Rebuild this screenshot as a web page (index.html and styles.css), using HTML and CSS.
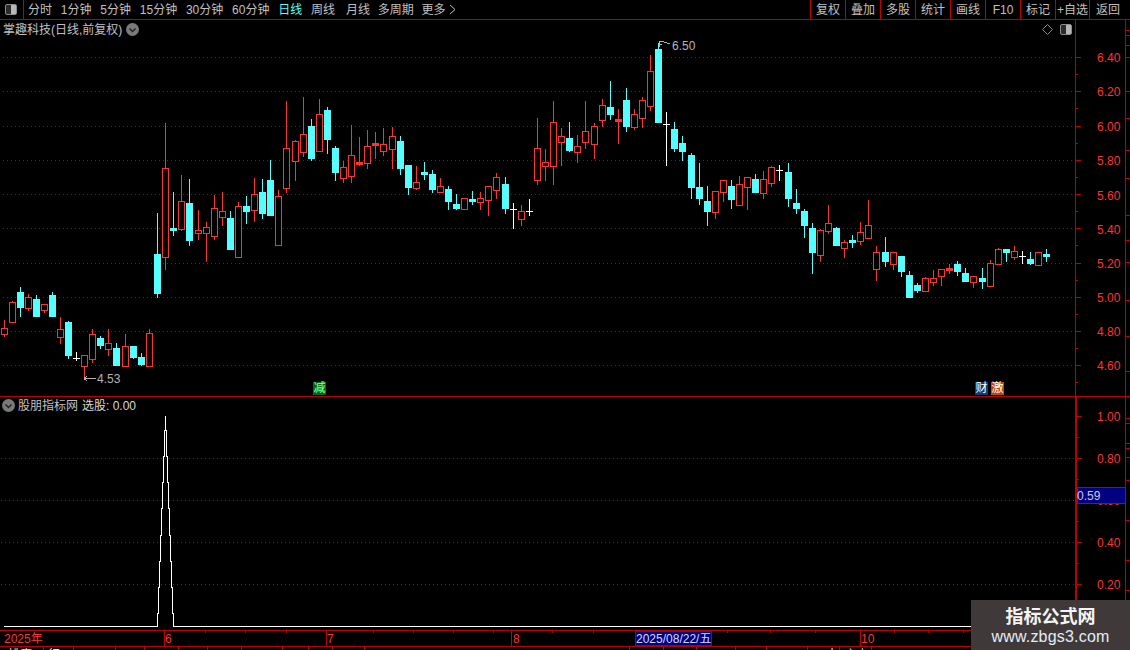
FILE: index.html
```html
<!DOCTYPE html>
<html lang="zh-CN">
<head>
<meta charset="utf-8">
<title>掌趣科技 日线</title>
<link rel="stylesheet" href="styles.css">
</head>
<body>
<div class="app">
  <header class="topbar">
    <div class="layout-btn"><span class="toggle"></span></div>
    <nav class="tabs">
      <span>分时</span><span>1分钟</span><span>5分钟</span><span>15分钟</span><span>30分钟</span><span>60分钟</span>
      <span class="active">日线</span><span>周线</span><span class="loose">月线</span><span class="tight">多周期</span>
      <span class="tight">更多 <svg class="more" width="7" height="11" viewBox="0 0 7 11"><path d="M1 1l5 4.500-5 4.500"/></svg></span>
    </nav>
    <div class="tools">
      <span>复权</span><span>叠加</span><span>多股</span><span>统计</span><span>画线</span><span>F10</span><span>标记</span><span class="narrow">+自选</span><span class="last">返回</span>
    </div>
  </header>

  <section class="panel main-panel">
    <svg class="canvas" width="1130" height="376" viewBox="0 20 1130 376">
      <g class="grid">
        <path d="M3 57.500H1075M3 91.500H1075M3 126.500H1075M3 160.500H1075M3 194.500H1075M3 228.500H1075M3 263.500H1075M3 297.500H1075M3 331.500H1075M3 365.500H1075"/>
      </g>
      <g class="axis-line">
        <path d="M1075.500 20V396M1125.500 20V396"/>
        <path d="M1075 57.500h6M1075 91.500h6M1075 126.500h6M1075 160.500h6M1075 194.500h6M1075 228.500h6M1075 263.500h6M1075 297.500h6M1075 331.500h6M1075 365.500h6"/>
        <path d="M1075 74.500h3M1075 108.500h3M1075 143.500h3M1075 177.500h3M1075 211.500h3M1075 245.500h3M1075 280.500h3M1075 314.500h3M1075 348.500h3M1075 382.500h3"/>
        <path d="M1126 30.500h4M1126 35.500h4M1126 45.500h4M1126 57.500h4M1126 91.500h4M1126 118.500h4M1126 150.500h4M1126 178.500h4M1126 215.500h4M1126 240.500h4M1126 262.500h4M1126 300.500h4M1126 336.500h4M1126 371.500h4"/>
      </g>
      <g class="axis-text">
        <text x="1097" y="62">6.40</text><text x="1097" y="96">6.20</text><text x="1097" y="131">6.00</text><text x="1097" y="165">5.80</text><text x="1097" y="200">5.60</text>
        <text x="1097" y="234">5.40</text><text x="1097" y="268">5.20</text><text x="1097" y="302">5.00</text><text x="1097" y="336">4.80</text><text x="1097" y="370">4.60</text>
      </g>
      <g id="candles" data-src="chart.js">
        <path id="red" class="c-red"/>
        <path id="cyanWick" class="c-cyan-wick"/>
        <path id="cyanBody" class="c-cyan-body"/>
        <path id="white" class="c-white"/>
      </g>
      <path class="pointer" d="M659 47V41H664M659 44H662M661 41L670 44"/>
      <text class="price" x="672" y="50">6.50</text>
      <path class="pointer" d="M84 378.500H96M84 378.500L87 376M84 378.500L87 381"/>
      <text class="price" x="97" y="383">4.53</text>
    </svg>
    <div class="title-row">
      <span>掌趣科技(日线,前复权)</span>
      <svg class="chev" width="13" height="13" viewBox="0 0 13 13"><circle cx="6.500" cy="6.500" r="6.500"/><path d="M3.500 5.500l3 3 3-3"/></svg>
    </div>
    <svg class="corner-diamond" width="11" height="11" viewBox="0 0 11 11"><path d="M5.500 .5l5 5-5 5-5-5z"/></svg>
    <span class="toggle corner-toggle"></span>
    <b class="flag flag-green">减</b>
    <b class="flag flag-blue">财</b>
    <b class="flag flag-orange">激</b>
  </section>

  <section class="panel sub-panel">
    <svg class="canvas" width="1130" height="233" viewBox="0 397 1130 233">
      <g class="grid"><path d="M1 458.500H1075M1 500.500H1075M1 542.500H1075M1 584.500H1075"/></g>
      <g class="axis-line thick"><path d="M1076 397V630"/></g>
      <g class="axis-line">
        <path d="M1125.500 397V630"/>
        <path d="M1076 416.500h6M1076 458.500h6M1076 500.500h6M1076 542.500h6M1076 584.500h6M1076 437.500h3M1076 479.500h3M1076 521.500h3M1076 563.500h3M1076 605.500h3"/>
        <path d="M1126 418.500h4M1126 423.500h4M1126 443.500h4M1126 448.500h4M1126 457.500h4M1126 480.500h4M1126 520.500h4M1126 560.500h4M1126 590.500h4"/>
      </g>
      <g class="axis-text">
        <text x="1097" y="421">1.00</text><text x="1097" y="463">0.80</text><text x="1097" y="505">0.60</text><text x="1097" y="547">0.40</text><text x="1097" y="589">0.20</text>
      </g>
      <path class="signal" d="M4 626.500H157.500V613H158.500V587H159.500V561H160.500V535H161.500V508H162.500V482H163.500V456H164.500V430H165.500V416V430H166.500V456H167.500V482H168.500V508H169.500V535H170.500V561H171.500V587H172.500V613H173.500V626.500H1075"/>
      <rect class="badge" x="1077" y="487.500" width="48" height="16"/>
      <text class="badge-text" x="1077" y="500">0.59</text>
    </svg>
    <div class="title-row sub-title">
      <svg class="chev" width="13" height="13" viewBox="0 0 13 13"><circle cx="6.500" cy="6.500" r="6.500"/><path d="M3.500 5.500l3 3 3-3"/></svg>
      <span>股朋指标网</span>
      <span class="select">选股: 0.00</span>
    </div>
  </section>

  <footer class="time-strip">
    <svg class="canvas" width="1130" height="20" viewBox="0 630 1130 20">
      <g class="axis-line">
        <path d="M0 630.500H1130M0 646.500H1130"/>
        <path d="M164.500 630V646M326.500 630V646M511.500 630V646M860.500 630V646"/>
        <path d="M205.500 630v3M245.500 630v3M286.500 630v3M373.500 630v3M413.500 630v3M453.500 630v3M493.500 630v3M552.500 630v3M593.500 630v3M727.500 630v3M770.500 630v3M815.500 630v3M894.500 630v3M928.500 630v3M963.500 630v3"/>
        <path d="M43.500 646v4M73.500 646v4M115.500 646v4M144.500 646v4M178.500 646v4M207.500 646v4M241.500 646v4M282.500 646v4M308.500 646v4M332.500 646v4M364.500 646v4M629.500 646v4M663.500 646v4M696.500 646v4M735.500 646v4M766.500 646v4M807.500 646v4M839.500 646v4M871.500 646v4"/>
      </g>
      <g class="axis-text time-text">
        <text x="4" y="643">2025年</text><text x="165" y="643">6</text><text x="327" y="643">7</text><text x="513" y="643">8</text><text x="861" y="643">10</text>
      </g>
      <rect class="date-box" x="635.500" y="631.500" width="76" height="14"/>
      <text class="date-text" x="636" y="643">2025/08/22/五</text>
      <text class="tip" x="8" y="659">排序</text>
      <text class="tip" x="48" y="659">行</text>
      <text class="tip" x="826" y="659">十</text>
      <text class="tip tip-cyan" x="845" y="659">主力</text>
    </svg>
  </footer>

  <aside class="watermark">
    <strong>指标公式网</strong>
    <span>www.zbgs3.com</span>
  </aside>
</div>
<script src="chart.js"></script>
</body>
</html>
```

FILE: styles.css
```css
* { box-sizing: border-box; }
html, body { margin: 0; padding: 0; background: #000; }
body { font: 12px/1 "Liberation Sans", "Noto Sans CJK SC", sans-serif; color: #c0c0c0; }

.app {
  position: relative;
  width: 1130px;
  height: 650px;
  overflow: hidden;
  background: #000;
  display: flex;
  flex-direction: column;
}

/* top toolbar */
.topbar {
  display: flex;
  flex: 0 0 20px;
  height: 20px;
  border-bottom: 1px solid #c00000;
}
.layout-btn {
  flex: 0 0 24px;
  border-right: 1px solid #c00000;
  padding-right: 1px;
  display: flex;
  align-items: center;
  justify-content: center;
}
.toggle {
  display: block;
  width: 12px;
  height: 11px;
  border: 1px solid #8c8c8c;
  border-radius: 2px;
  background: linear-gradient(to right, #2c2c2c 50%, #b8b8b8 50%);
}
.tabs {
  display: flex;
  align-items: center;
  gap: 8.800px;
  padding-left: 4px;
  flex: 1;
}
.tabs span { white-space: nowrap; }
.tabs .active { color: #55ffff; }
.tabs .loose { margin-left: 2px; }
.tabs .tight { margin-left: -1px; }
.more { vertical-align: -1px; fill: none; stroke: #c0c0c0; }
.tools { display: flex; height: 19px; }
.tools span {
  width: 35px;
  border-left: 1px solid #c00000;
  display: flex;
  align-items: center;
  justify-content: center;
  white-space: nowrap;
}
.tools .narrow { width: 34px; }
.tools .last { width: 41px; padding-right: 4px; }

/* chart panels */
.panel { position: relative; }
.main-panel { flex: 0 0 377px; height: 377px; border-bottom: 1px solid #c00000; }
.sub-panel { flex: 0 0 233px; height: 233px; }
.canvas { position: absolute; left: 0; top: 0; display: block; }
.grid path { fill: none; stroke: #b00000; stroke-dasharray: 1 3; shape-rendering: crispEdges; }
.axis-line path { fill: none; stroke: #c00000; shape-rendering: crispEdges; }
.axis-line.thick path { stroke-width: 2; }
.axis-text text { fill: #ff3232; font-size: 12px; }
.price { fill: #b4b4b4; font-size: 12px; }
.pointer { fill: none; stroke: #b4b4b4; shape-rendering: crispEdges; }

.c-red { fill: #000; stroke: #ff3232; shape-rendering: crispEdges; }
.c-cyan-wick { fill: none; stroke: #55ffff; shape-rendering: crispEdges; }
.c-cyan-body { fill: #55ffff; shape-rendering: crispEdges; }
.c-white { fill: none; stroke: #fff; shape-rendering: crispEdges; }

.title-row {
  position: relative;
  display: flex;
  align-items: center;
  gap: 4px;
  height: 19px;
  padding-left: 3px;
  white-space: nowrap;
}
.sub-title { gap: 3px; padding-left: 2px; height: 17px; }
.sub-title .select { margin-left: 1px; color: #d8d8d8; }
.chev circle { fill: #7a7a7a; }
.chev path { fill: none; stroke: #222; stroke-width: 1.500; }

.corner-diamond { position: absolute; left: 1042px; top: 4px; fill: none; stroke: #8c8c8c; }
.corner-toggle { position: absolute; left: 1060px; top: 4px; }

.flag {
  position: absolute;
  top: 362px;
  width: 13px;
  height: 13px;
  font-weight: normal;
  font-size: 12px;
  line-height: 13px;
  text-align: center;
  color: #fff;
}
.flag-green { left: 313px; background: #006a18; color: #9cff9c; }
.flag-blue { left: 975px; background: #0a3e78; }
.flag-orange { left: 991px; background: #b84a10; }

.signal { fill: none; stroke: #fff; shape-rendering: crispEdges; }
.badge { fill: #000080; stroke: #c00000; shape-rendering: crispEdges; }
.badge-text { fill: #c8c8e8; font-size: 12px; }

/* time axis */
.time-strip { position: relative; flex: 0 0 20px; height: 20px; overflow: hidden; }
.date-box { fill: #000080; stroke: #2020c0; shape-rendering: crispEdges; }
.date-text { fill: #d8d8f8; font-size: 12px; }
.tip { fill: #e0e0e0; font-size: 12px; }
.tip-cyan { fill: #55ffff; }

/* watermark badge */
.watermark {
  position: absolute;
  right: 0;
  bottom: 0;
  width: 159px;
  height: 50px;
  background: #3f3a39;
  display: flex;
  flex-direction: column;
  align-items: center;
  padding-top: 4px;
  gap: 2px;
  color: #eef3fa;
}
.watermark strong { font: 700 18px/22px "Noto Sans CJK SC", sans-serif; color: #f4f4f4; }
.watermark span { font: 16px/18px "Liberation Sans", sans-serif; letter-spacing: .2px; color: #e2ecf8; }
```

FILE: chart.js
```js
// Daily candles: [kind, high, low, bodyTop, bodyBottom] in page pixels.
// kind: r = rising (hollow red), c = falling (solid cyan), w = doji (white cross).
var DATA = [
  ['r',320,336,328,334],['r',301,322,302,322],['c',287,316,292,307],['r',294,310,297,308],['c',295,316,299,316],
  ['r',304,312,304,310],['c',292,316,295,316],['r',317,343,329,337],['c',321,358,322,355],['w',352,360,358,358],
  ['r',355,378,355,366],['r',329,362,334,359],['c',336,348,338,345],['r',329,355,343,349],['c',343,365,348,365],
  ['r',334,366,346,366],['c',346,358,346,357],['c',353,365,357,364],['r',329,366,333,366],['c',213,297,254,293],
  ['r',123,269,168,257],['c',192,235,228,230],['r',175,230,201,229],['c',179,245,203,240],['r',210,239,230,233],
  ['r',222,261,227,233],['r',195,239,208,236],['r',192,225,211,217],['c',211,249,218,249],['r',202,257,206,257],
  ['c',196,223,206,211],['r',178,221,194,210],['c',179,218,192,213],['c',160,215,180,215],['r',190,245,196,245],
  ['r',101,192,148,188],['r',140,180,141,161],['r',97,156,134,152],['c',119,160,126,158],['r',99,151,114,151],
  ['c',107,153,110,139],['c',146,180,148,172],['r',161,182,167,178],['r',125,182,155,176],['r',137,165,162,164],
  ['r',130,168,146,163],['r',132,158,143,145],['r',128,155,144,151],['r',127,168,136,149],['c',136,174,141,168],
  ['c',165,194,165,187],['r',166,189,182,188],['c',162,179,172,174],['c',170,192,174,189],['r',178,192,186,192],
  ['c',186,209,189,201],['c',194,209,204,208],['r',198,209,198,209],['c',191,204,199,201],['r',192,209,198,202],
  ['r',186,215,186,200],['r',173,198,177,190],['c',177,213,184,208],['w',203,228,209,209],['r',205,225,211,219],
  ['w',199,215,211,211],['r',118,184,148,180],['r',149,180,162,166],['r',101,184,122,166],['r',128,165,136,142],
  ['c',122,151,138,150],['r',135,162,146,152],['r',101,148,131,142],['r',123,158,126,144],['r',99,126,105,120],
  ['c',81,119,107,114],['r',109,143,119,121],['c',88,131,100,126],['r',109,129,114,127],['r',97,127,100,118],
  ['r',55,110,71,106],['c',43,122,49,122],['w',112,165,124,124],['c',122,151,129,148],['c',136,160,143,151],
  ['c',153,198,155,187],['c',163,204,187,198],['c',186,225,201,211],['r',191,218,191,212],['r',180,201,180,192],
  ['c',180,208,186,199],['r',176,205,184,205],['r',177,209,177,187],['c',174,192,179,192],['r',171,198,179,193],
  ['r',166,186,167,183],['w',165,180,170,170],['c',163,206,172,198],['c',189,213,203,208],['c',209,237,211,225],
  ['c',223,273,228,252],['r',229,261,230,255],['r',205,233,223,231],['c',227,245,228,245],['r',240,257,242,248],
  ['c',235,247,240,242],['r',222,244,232,241],['r',200,238,225,238],['r',246,280,252,269],['c',237,266,252,261],
  ['r',252,269,252,264],['c',256,276,256,271],['c',271,297,275,297],['c',283,292,285,290],['r',277,291,278,291],
  ['r',270,285,278,282],['r',269,285,269,276],['r',264,273,268,270],['c',261,275,264,271],['c',268,281,273,281],
  ['r',276,287,276,282],['c',268,288,278,281],['r',260,286,263,286],['r',248,264,249,264],['c',249,261,249,252],
  ['r',246,259,251,257],['w',251,263,256,256],['c',252,264,259,263],['r',252,265,252,265],['c',249,261,254,256]
];
// Bars sit 8px apart with one extra pixel at these indexes (rounding of the original chart).
var WIDE = [15,24,36,48,62,73,85,97,109,121];

var red = '', cyanWick = '', cyanBody = '', white = '';
DATA.forEach(function (d, i) {
  var extra = WIDE.filter(function (n) { return n <= i; }).length;
  var x = 4 + 8 * i + extra, hi = d[1], lo = d[2], top = d[3], bot = d[4];
  var m = x + 0.5, l = x - 3, bh = bot - top;
  if (d[0] === 'r') {
    if (hi < top) red += 'M' + m + ' ' + hi + 'V' + top;
    if (lo > bot) red += 'M' + m + ' ' + (bot + 1) + 'V' + (lo + 1);
    red += 'M' + (l + 0.5) + ' ' + (top + 0.5) + 'h6v' + bh + 'h-6z';
    if (bh <= 2) red += 'M' + l + ' ' + (top + 1.5) + 'h7';
  } else if (d[0] === 'c') {
    cyanWick += 'M' + m + ' ' + hi + 'V' + (lo + 1);
    cyanBody += 'M' + l + ' ' + top + 'h7v' + (bh + 1) + 'h-7z';
  } else {
    white += 'M' + m + ' ' + hi + 'V' + (lo + 1) + 'M' + l + ' ' + (top + 0.5) + 'h7';
  }
});
document.getElementById('red').setAttribute('d', red);
document.getElementById('cyanWick').setAttribute('d', cyanWick);
document.getElementById('cyanBody').setAttribute('d', cyanBody);
document.getElementById('white').setAttribute('d', white);
```
